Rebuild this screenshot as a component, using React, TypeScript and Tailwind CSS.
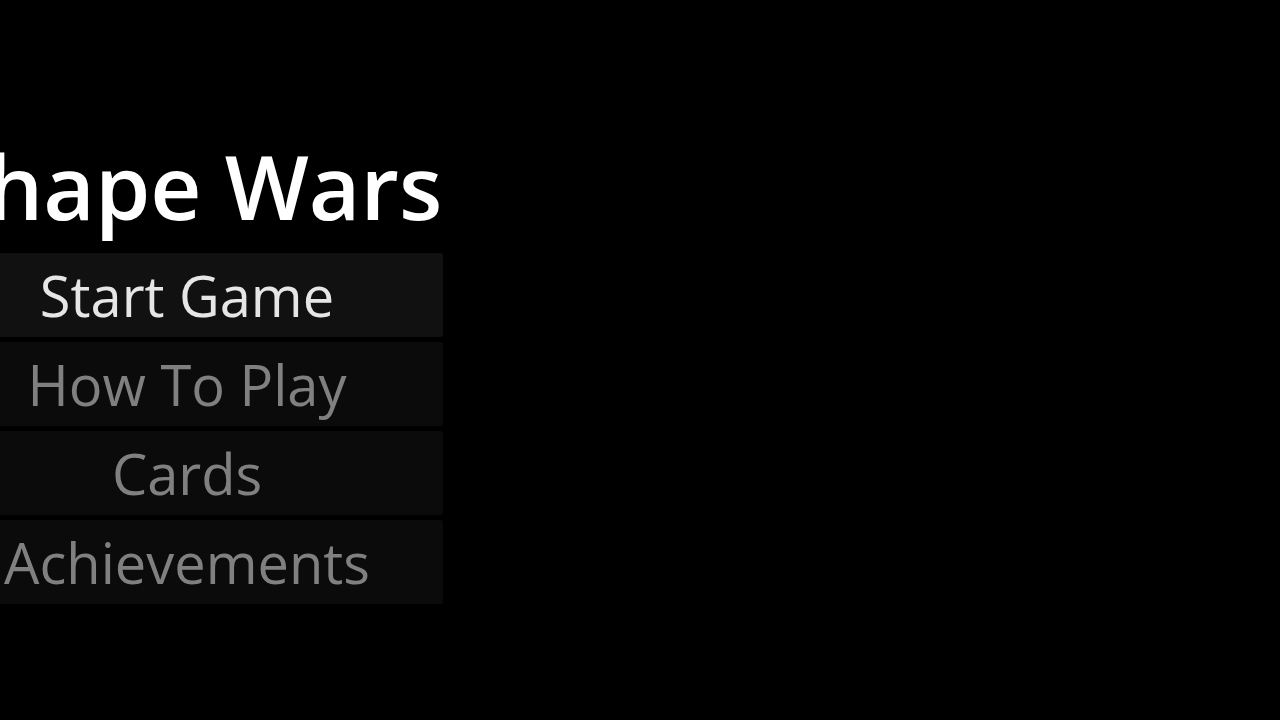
import React from 'react';

const items = [
	{ label: 'Start Game', active: true },
	{ label: 'How To Play', active: false },
	{ label: 'Cards', active: false },
	{ label: 'Achievements', active: false },
];

const App: React.FC = () => {
	return (
		<div className="w-[1280px] h-[720px] bg-black overflow-hidden font-['Open_Sans',sans-serif]">
			<div className="ml-[-69px] w-[512px] pt-[131px] flex flex-col">
				<h1 className="text-white text-center text-[89px] font-semibold leading-[110px] mb-[12px] pl-[6px] whitespace-nowrap">
					Shape Wars
				</h1>
				<div className="flex flex-col gap-[5px]">
					{items.map((item) => (
						<button
							key={item.label}
							className={`h-[84px] rounded-[3px] text-[56px] font-medium leading-none flex items-center justify-center ${
								item.active ? 'bg-[#111111] text-[#e6e6e6]' : 'bg-[#0b0b0b] text-[#808080]'
							}`}
						>
							{item.label}
						</button>
					))}
				</div>
			</div>
		</div>
	);
};

export default App;
